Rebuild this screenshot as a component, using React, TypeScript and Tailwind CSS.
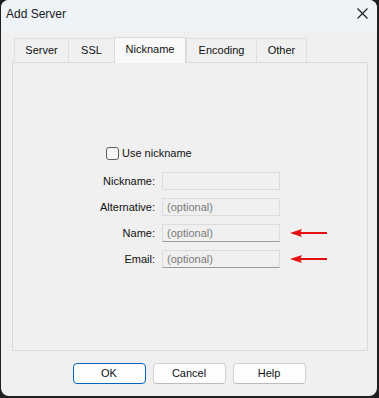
import React from "react";

const tabs = [
  { name: "Server", w: 54 },
  { name: "SSL", w: 46 },
  { name: "Nickname", w: 72, active: true },
  { name: "Encoding", w: 70 },
  { name: "Other", w: 51, last: true },
];

function Arrow() {
  return (
    <svg width="38" height="10" viewBox="0 0 38 10" className="block">
      <path d="M0 5 L12 1 L10.5 4 L37 4 L37 6 L10.5 6 L12 9 Z" fill="#e60f0f" />
    </svg>
  );
}

function Field({
  label,
  placeholder,
  dark,
  arrow,
}: {
  label: string;
  placeholder?: string;
  dark?: boolean;
  arrow?: boolean;
}) {
  return (
    <>
      <div className="text-right leading-[18px] text-[#111]">{label}</div>
      <div
        className={
          "h-[18px] w-[118px] border bg-[#f0f0f0] px-[4px] leading-[16px] text-[#7a7a7a] " +
          (dark ? "border-[#dcdcdc] border-b-[#9a9a9a]" : "border-[#dcdcdc]")
        }
      >
        {placeholder}
      </div>
      <div className="flex h-[18px] items-center pl-[3px]">{arrow ? <Arrow /> : null}</div>
    </>
  );
}

export default function App() {
  return (
    <div
      className="h-[398px] w-[379px] bg-[#1f1f1f] pb-[2px] pl-[1px] pr-[2px] text-[11px] text-[#111]"
      style={{ fontFamily: '"Liberation Sans", Arial, sans-serif' }}
    >
      <div className="flex h-full flex-col overflow-hidden rounded-[8px] bg-[#f0f0f0]">
        <div className="flex h-[30px] shrink-0 items-center bg-[#eef3f8] pl-[5px] pr-[9px]">
          <span className="pb-[2px] text-[12px] text-[#1a1a1a]">Add Server</span>
          <svg width="11" height="11" viewBox="0 0 11 11" className="ml-auto mb-[3px]">
            <path d="M0.5 0.5 L10.5 10.5 M10.5 0.5 L0.5 10.5" stroke="#1a1a1a" strokeWidth="1.1" />
          </svg>
        </div>
        <div className="flex flex-1 flex-col px-[11px] pt-[7px]">
          <div className="relative z-10 flex h-[25px] items-end pl-[2px]">
            {tabs.map((t) =>
              t.active ? (
                <div
                  key={t.name}
                  style={{ width: t.w }}
                  className="-mb-px flex h-[26px] items-center justify-center border border-b-0 border-[#dadada] bg-[#f9f9f9] pb-[3px]"
                >
                  {t.name}
                </div>
              ) : (
                <div
                  key={t.name}
                  style={{ width: t.w }}
                  className={
                    "flex h-[24px] items-center justify-center border-l border-t border-[#dedede] bg-[#f0f0f0] " +
                    (t.last ? "border-r" : "")
                  }
                >
                  {t.name}
                </div>
              )
            )}
          </div>
          <div className="h-[289px] w-[356px] border border-[#dadada] bg-[#f0f0f0] pt-[84px]">
            <div className="flex h-[13px] items-center pl-[93px]">
              <div className="h-[13px] w-[13px] rounded-[3px] border border-[#5f5f5f] bg-[#f7f7f7]" />
              <span className="ml-[3px]">Use nickname</span>
            </div>
            <div className="mt-[12px] grid grid-cols-[142px_118px_auto] gap-x-[7px] gap-y-[8px]">
              <Field label="Nickname:" />
              <Field label="Alternative:" placeholder="(optional)" />
              <Field label="Name:" placeholder="(optional)" dark arrow />
              <Field label="Email:" placeholder="(optional)" dark arrow />
            </div>
          </div>
          <div className="mt-[12px] flex justify-center gap-[7px]">
            <button className="h-[21px] w-[73px] rounded-[4px] border border-[#0067c0] bg-[#fdfdfd] leading-[19px]">
              OK
            </button>
            <button className="h-[21px] w-[73px] rounded-[4px] border border-[#d0d0d0] border-b-[#bcbcbc] bg-[#fdfdfd] leading-[19px]">
              Cancel
            </button>
            <button className="h-[21px] w-[73px] rounded-[4px] border border-[#d0d0d0] border-b-[#bcbcbc] bg-[#fdfdfd] leading-[19px]">
              Help
            </button>
          </div>
        </div>
      </div>
    </div>
  );
}
